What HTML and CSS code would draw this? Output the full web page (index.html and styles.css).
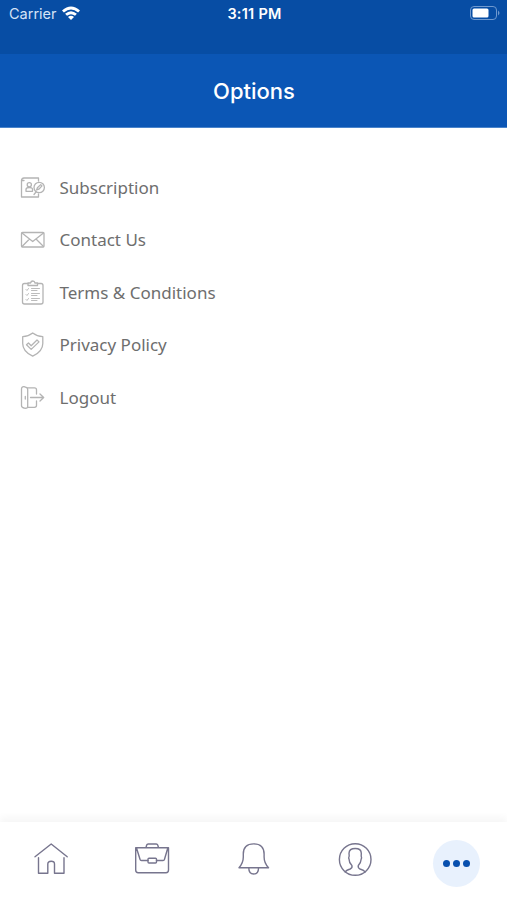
FILE: index.html
```html
<!DOCTYPE html>
<html lang="en">
<head>
<meta charset="utf-8">
<title>Options</title>
<link rel="stylesheet" href="styles.css">
</head>
<body>
<div class="app">
  <div class="status">
    <div class="carrier"><span>Carrier</span>
      <svg class="wifi" viewBox="0 0 18 14"><path d="M0 4.6Q9-3.6 18 4.6L16.1 6.6Q9 .2 1.9 6.6Z"/><path d="M3.1 7.8Q9 2.7 14.9 7.8L13 9.8Q9 6.5 5 9.8Z"/><path d="M6 10.9Q9 8.6 12 10.9L9 14Z"/></svg>
    </div>
    <span class="time">3:11 PM</span>
    <svg class="battery" viewBox="0 0 30 14"><rect class="shell" x=".5" y=".5" width="26" height="13" rx="3.5"/><rect class="charge" x="2.5" y="2.5" width="16" height="9" rx="1.5"/><path class="tip" d="M28 4.5Q31 7 28 9.5Z"/></svg>
  </div>
  <header class="header"><h1>Options</h1></header>
  <main class="menu">
    <a class="row"><svg viewBox="0 0 28 28"><path d="M19.5 7V4H5Q2.5 4 2.5 6.5V23H19.5V20M2.5 6.5H5"/><circle cx="10.3" cy="10.7" r="2.1"/><path d="M7 17.3V15.5Q7 13.5 10.3 13.5T13.5 15.5V17.3Z"/><circle cx="20.2" cy="13.5" r="5.2"/><path d="M17.6 16L18.4 13.8 21.7 10.6 23 11.9 19.8 15.2ZM17 18L15 20.5"/></svg><span>Subscription</span></a>
    <a class="row"><svg viewBox="0 0 28 28"><rect x="2.5" y="6.5" width="22.5" height="14.5" rx="1"/><path d="M3 7L13.7 15.5 24.5 7M3 20.5L10.5 13M24.5 20.5L17 13"/></svg><span>Contact Us</span></a>
    <a class="row"><svg viewBox="0 0 28 28"><path d="M9 4.5H5.5Q3.5 4.5 3.5 6.5V23Q3.5 25 5.5 25H22Q24 25 24 23V6.5Q24 4.5 22 4.5H18.5"/><path d="M9 6.5V4H11.5Q12 2 13.8 2T16 4H18.5V6.5Z"/><path class="fine" d="M7 10.5L8 11.5 9.5 9.5M7 15.5L8 16.5 9.5 14.5M7 20.5L8 21.5 9.5 19.5M12.5 9.5H20.5M12.5 11.5H18M12.5 14.5H20.5M12.5 16.5H18M12.5 19.5H20.5M12.5 21.5H18"/></svg><span>Terms &amp; Conditions</span></a>
    <a class="row"><svg viewBox="0 0 28 28"><path d="M13.7 2Q18 5.3 23.8 5.7V12.5Q23.8 20.5 13.7 25.2Q3.7 20.5 3.7 12.5V5.7Q9.5 5.3 13.7 2Z"/><path d="M7.5 13.8L9.5 12 12.2 14.7 18 9 20 10.9 12.2 18.4Z"/></svg><span>Privacy Policy</span></a>
    <a class="row"><svg viewBox="0 0 28 28"><path d="M8.5 3.8L5 2.7Q2.5 2.5 2.5 5V21.5Q2.5 23.5 5 24L7 24.3Q8.7 24.3 8.7 22.5V5.5Q8.7 3.8 7 3.3M8.5 3.8H15.5Q17.5 3.8 17.5 5.8V10M17.5 17V21.5Q17.5 23.3 15.5 23.3H8.7M6.3 12.5V15M11.5 13.5H24.5M21 10L24.7 13.5 21 17"/></svg><span>Logout</span></a>
  </main>
  <nav class="tabs">
    <a class="tab"><svg viewBox="0 0 36 36"><path d="M2 15.7L18.2 3 34.2 15.7M5.5 16.7V32.2H14.8V23Q14.8 20.2 18.2 20.2T21.5 23V32.2H31V16.7"/></svg></a>
    <a class="tab"><svg viewBox="0 0 36 36"><path d="M1.7 6.7H34.5V29Q34.5 31.7 32 31.7H4.2Q1.7 31.7 1.7 29ZM2.5 7L6 18.3Q6.3 19.5 7.5 19.5H14M22.5 19.5H29Q30.2 19.5 30.5 18.3L33.8 7M12 6.5L12.7 4Q13 3 14.2 3H22.2Q23.4 3 23.7 4L24.5 6.5"/><rect x="14" y="17.2" width="8.5" height="4.8" rx="1"/></svg></a>
    <a class="tab"><svg viewBox="0 0 36 36"><path d="M4 26.7Q8.3 22 8.3 16V13Q8.3 2.9 18.7 2.9T29.1 13V16Q29.1 22 33.5 26.7ZM13.8 27Q13.8 33 18.7 33T23.5 27"/></svg></a>
    <a class="tab"><svg viewBox="0 0 36 36"><circle cx="18.2" cy="18.5" r="15.8"/><path d="M8.2 31Q9 29.3 13.2 28 15.6 27 14.9 24.5 12 21.5 12.1 18.4 11.2 17 12.2 15L12 12.3Q12.2 7.5 18.2 7.5T24.3 12.3L24.2 15Q25 17 24.1 18.4 24 21.5 21.3 24.5 20.7 27 23 28 27.2 29.3 28.2 31"/></svg></a>
    <a class="tab active"><span class="dots"><i></i><i></i><i></i></span></a>
  </nav>
</div>
</body>
</html>
```
FILE: styles.css
```css
* { box-sizing: border-box; }
body { margin: 0; background: #fff; }
.app { height: 900px; display: flex; flex-direction: column; overflow: hidden; }
.status {
  height: 54px; flex: none;
  display: grid; grid-template-columns: 1fr auto 1fr; align-items: start;
  padding: 4px 7px 0 9px;
  background: #074da4; color: #fff;
  font: 14.5px/20px Inter, sans-serif;
}
.carrier { display: flex; align-items: center; gap: 5px; color: #d5e3f6; }
.wifi { width: 18px; height: 14px; fill: #fff; margin-top: -2px; }
.time { font-weight: 600; font-size: 14.5px; letter-spacing: .25px; }
.battery { width: 30px; height: 14px; justify-self: end; margin-top: 2px; }
.shell { fill: none; stroke: #6f99cf; }
.charge { fill: #fff; }
.tip { fill: #6f99cf; }
.header {
  height: 74px; flex: none;
  display: flex; align-items: center; justify-content: center;
  background: #0b56b5; border-bottom: 1px solid #4a84cb;
}
.header h1 { margin: 1px 0 0 1px; color: #fff; font: 500 22px/30px Inter, sans-serif; }
.menu { flex: 1; padding: 33.3px 19px 0; }
.row { display: flex; align-items: center; gap: 12.5px; height: 52.6px; color: #6e6e6e; font: 17px/24px "Noto Sans", "Open Sans", sans-serif; }
.row svg { width: 28px; height: 28px; fill: none; stroke: #b4b4b4; stroke-width: 1.3; stroke-linejoin: round; stroke-linecap: round; }
.row .fine { stroke-width: .9; }
.tabs {
  height: 78px; flex: none;
  display: grid; grid-template-columns: repeat(5, 1fr);
  background: #fff; box-shadow: 0 -5px 7px rgba(0, 0, 0, .035);
}
.tab { display: flex; justify-content: center; padding-top: 19px; }
.tab svg { width: 36px; height: 36px; fill: none; stroke: #77758e; stroke-width: 1.4; stroke-linejoin: round; stroke-linecap: round; }
.dots { width: 47px; height: 47px; border-radius: 50%; background: #e8f1fd; display: flex; align-items: center; justify-content: center; gap: 3px; }
.tab.active { padding-top: 18px; }
.dots i { width: 7px; height: 7px; border-radius: 50%; background: #074fae; }
```
